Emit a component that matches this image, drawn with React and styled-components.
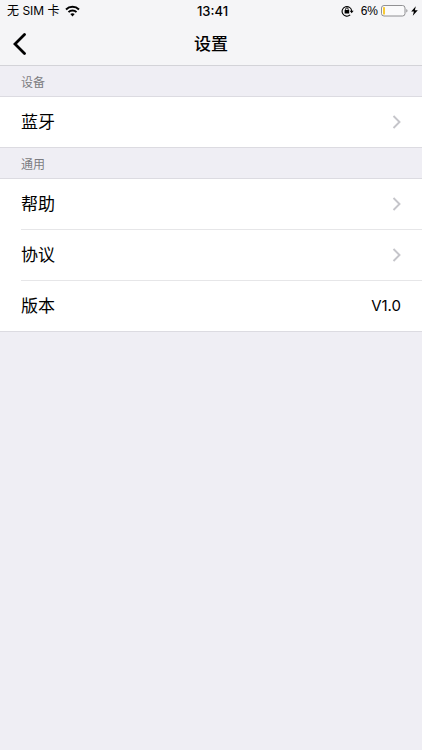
import React from "react";
import styled, { createGlobalStyle } from "styled-components";

const GlobalStyle = createGlobalStyle`
  *, *::before, *::after { box-sizing: border-box; }
  body {
    margin: 0;
    background: #efeef4;
    color: #000;
    font-family: Inter, "Noto Sans CJK SC", sans-serif;
  }
`;

const Page = styled.div`
  min-height: 100vh;
  background: #efeef4;
`;

const Header = styled.header`
  background: #f5f5f7;
  border-bottom: 1px solid #d3d3d8;
`;

const StatusBar = styled.div`
  display: grid;
  grid-template-columns: 1fr auto 1fr;
  align-items: center;
  height: 22px;
  padding: 0 4px 0 7px;
  font-size: 12px;
  line-height: 22px;
`;

const StatusGroup = styled.div`
  display: flex;
  align-items: center;
  justify-content: ${(p) => (p.$end ? "flex-end" : "flex-start")};
  gap: ${(p) => (p.$end ? 3 : 5)}px;
`;

const Clock = styled.time`
  font-size: 13px;
  font-weight: 500;
`;

const Percent = styled.span`
  margin-left: 4px;
  font-family: "Liberation Sans", sans-serif;
`;

const NavBar = styled.nav`
  display: grid;
  grid-template-columns: 44px 1fr 44px;
  align-items: center;
  height: 43px;
`;

const BackButton = styled.button`
  display: flex;
  align-items: center;
  height: 43px;
  padding: 0 0 0 12px;
  border: 0;
  background: none;
  color: #000;
  cursor: pointer;
`;

const Title = styled.h1`
  margin: 0;
  text-align: center;
  font-size: 17px;
  font-weight: 500;
  line-height: 24px;
`;

const SectionTitle = styled.h2`
  margin: 0;
  padding: 4px 21px 0;
  color: #7c7c81;
  font-size: 12px;
  font-weight: 400;
  line-height: 26px;
`;

const List = styled.ul`
  margin: 0;
  padding: 0;
  list-style: none;
  background: #fff;
  border: solid #dcdbe1;
  border-width: 1px 0;
`;

const Item = styled.li`
  padding-left: 21px;

  & + & > * {
    border-top: 1px solid #e6e6e8;
  }
`;

const Row = styled.div`
  display: flex;
  align-items: center;
  justify-content: space-between;
  padding: 13px 21px 13px 0;
  color: #000;
  font-size: 17px;
  line-height: 24px;
  text-decoration: none;
`;

const Value = styled.span`
  font-size: 15px;
`;

const WifiIcon = () => (
  <svg width="15" height="12" viewBox="0 0 15 12" aria-hidden="true">
    <g fill="none" stroke="#000" strokeWidth="2">
      <path d="M1 4.4C4.6 1 10.4 1 14 4.4" />
      <path d="M3.5 7.1C5.7 5 9.3 5 11.5 7.1" />
    </g>
    <path d="M5.3 9.1C6.6 8 8.4 8 9.7 9.1L7.5 11.4Z" />
  </svg>
);

const RotationLockIcon = () => (
  <svg width="13" height="12" viewBox="0 0 13 12" aria-hidden="true">
    <path d="M9.2 9.9A4.8 4.8 0 1 1 10.7 6" fill="none" stroke="#000" strokeWidth="1.1" />
    <path d="M8.7 5.7H12.6L10.7 8.2Z" />
    <path d="M4.6 5.5V4.2a1.3 1.3 0 0 1 2.6 0v1.3" fill="none" stroke="#000" strokeWidth="0.9" />
    <rect x="3.6" y="5.1" width="4.6" height="3.5" rx="0.5" />
  </svg>
);

const BatteryIcon = () => (
  <svg width="27" height="12" viewBox="0 0 27 12" aria-hidden="true">
    <rect x="0.5" y="0.5" width="23.5" height="10.5" rx="2.5" fill="#fafafb" stroke="#858587" strokeWidth="0.9" />
    <rect x="2" y="2" width="2" height="7.5" rx="0.6" fill="#f7ca35" />
    <path d="M25.4 4C26.8 4.5 26.8 7 25.4 7.5Z" fill="#858587" />
  </svg>
);

const BoltIcon = () => (
  <svg width="7" height="10" viewBox="0 0 7 10" aria-hidden="true">
    <path d="M4.8 0.2L0.2 5.6H2.9L1.8 9.8L6.8 4.2H3.9Z" />
  </svg>
);

const BackIcon = () => (
  <svg width="16" height="22" viewBox="0 0 16 22" aria-hidden="true">
    <path d="M12.5 1.5L3 11L12.5 20.5" fill="none" stroke="currentColor" strokeWidth="2.8" strokeLinecap="round" />
  </svg>
);

const ChevronIcon = () => (
  <svg width="9" height="14" viewBox="0 0 9 14" aria-hidden="true">
    <path d="M1.5 1L7.5 7L1.5 13" fill="none" stroke="#c5c5ca" strokeWidth="1.9" />
  </svg>
);

const LinkItem = ({ href, children }) => (
  <Item>
    <Row as="a" href={href}>
      {children}
      <ChevronIcon />
    </Row>
  </Item>
);

export default function App() {
  return (
    <Page lang="zh-CN">
      <GlobalStyle />
      <Header>
        <StatusBar>
          <StatusGroup>
            <span>无 SIM 卡</span>
            <WifiIcon />
          </StatusGroup>
          <Clock>13:41</Clock>
          <StatusGroup $end>
            <RotationLockIcon />
            <Percent>6%</Percent>
            <BatteryIcon />
            <BoltIcon />
          </StatusGroup>
        </StatusBar>
        <NavBar>
          <BackButton type="button" aria-label="返回">
            <BackIcon />
          </BackButton>
          <Title>设置</Title>
        </NavBar>
      </Header>
      <main>
        <section>
          <SectionTitle>设备</SectionTitle>
          <List>
            <LinkItem href="#bluetooth">蓝牙</LinkItem>
          </List>
        </section>
        <section>
          <SectionTitle>通用</SectionTitle>
          <List>
            <LinkItem href="#help">帮助</LinkItem>
            <LinkItem href="#agreement">协议</LinkItem>
            <Item>
              <Row>
                版本
                <Value>V1.0</Value>
              </Row>
            </Item>
          </List>
        </section>
      </main>
    </Page>
  );
}
